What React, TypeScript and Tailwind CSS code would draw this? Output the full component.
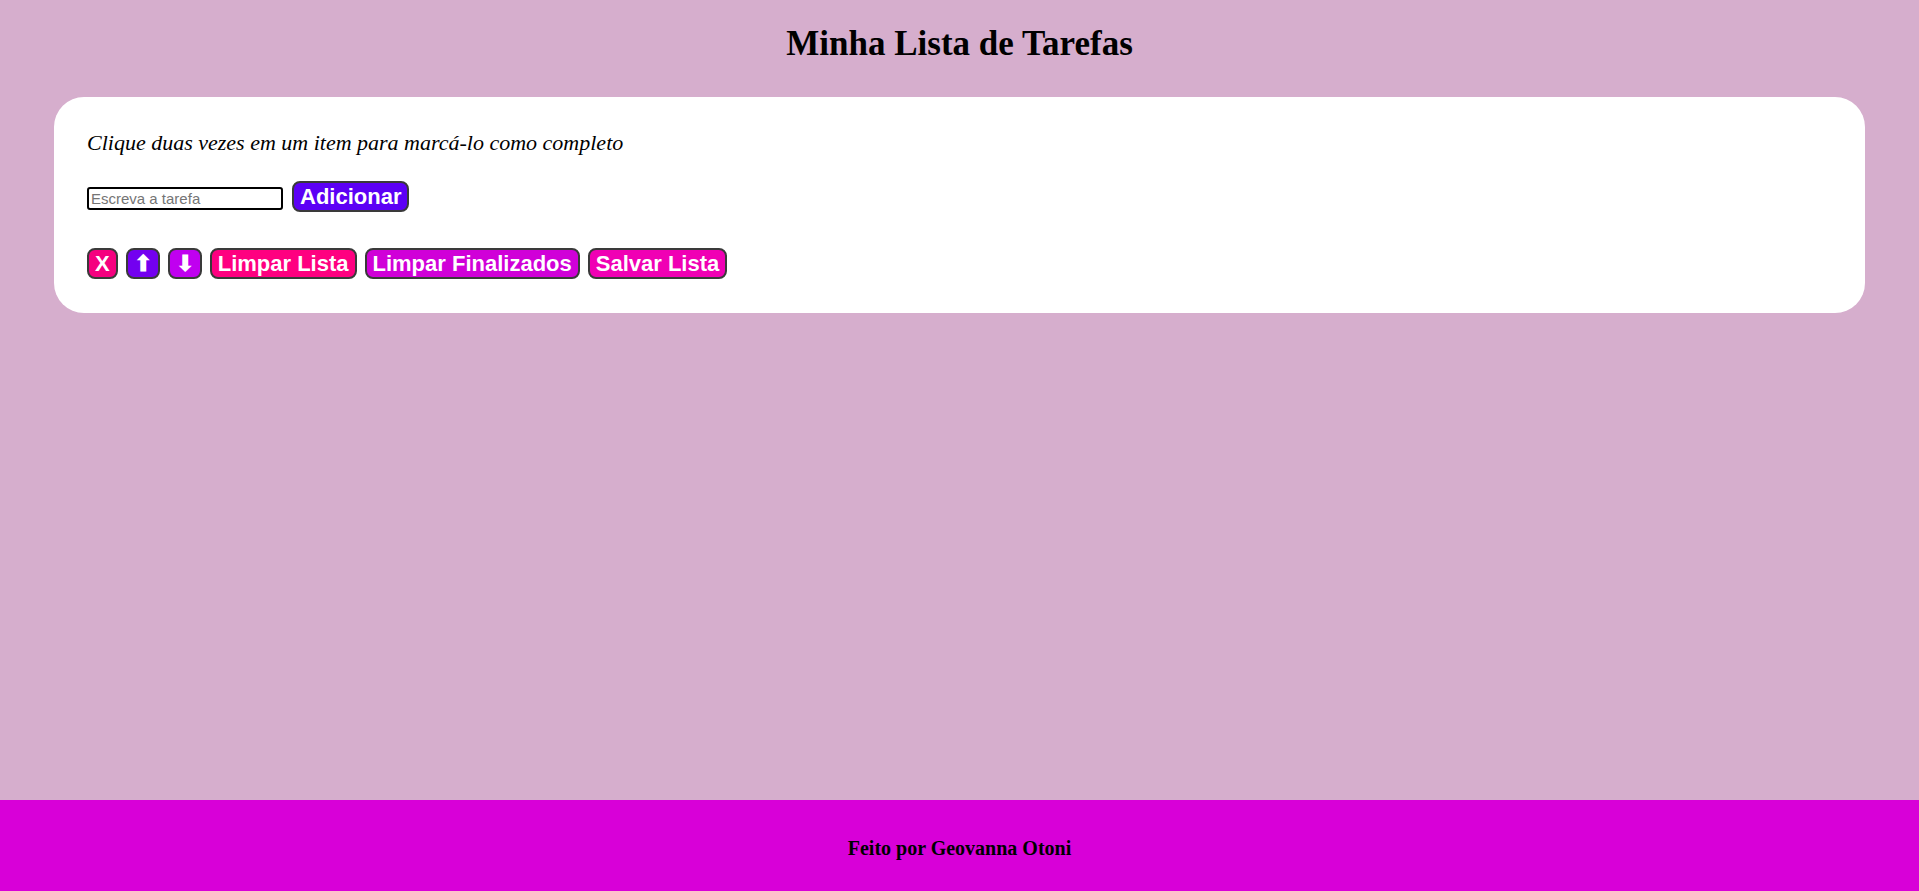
import React from "react";

const serif = { fontFamily: '"Liberation Serif", "Times New Roman", serif' };

function Btn({ children, className }: { children: React.ReactNode; className: string }) {
  return (
    <button
      className={`text-white font-bold text-[22px] leading-[25px] px-[6px] py-[1px] border-2 border-[#3a3a3a] rounded-[8px] font-['Liberation_Sans',Arial,sans-serif] ${className}`}
    >
      {children}
    </button>
  );
}

export default function App() {
  return (
    <div className="min-h-screen flex flex-col bg-[#d6aecd]" style={serif}>
      <h1 className="text-center font-bold text-[35px] leading-[40px] text-black mt-[24px] font-['Liberation_Serif',serif]">
        Minha Lista de Tarefas
      </h1>
      <div className="mx-[54px] mt-[33px] bg-white rounded-[30px] px-[33px] pt-[33px] pb-[34px]">
        <p className="italic text-[22px] leading-[25px] text-black font-['Liberation_Serif',serif]">
          Clique duas vezes em um item para marcá-lo como completo
        </p>
        <div className="mt-[26px] flex items-center gap-[9px]">
          <input
            className="w-[196px] h-[23px] mt-[3px] border-2 border-black rounded-[3px] px-[2px] text-[15px] text-black placeholder:text-[#757575] outline-none font-['Liberation_Sans',Arial,sans-serif]"
            placeholder="Escreva a tarefa"
          />
          <Btn className="bg-[#5c00f5]">Adicionar</Btn>
        </div>
        <div className="mt-[36px] flex items-center gap-[8px]">
          <Btn className="bg-[#f5007f]">X</Btn>
          <Btn className="bg-[#7300f0]">⬆</Btn>
          <Btn className="bg-[#c000f0]">⬇</Btn>
          <Btn className="bg-[#ff0080]">Limpar Lista</Btn>
          <Btn className="bg-[#d000d8]">Limpar Finalizados</Btn>
          <Btn className="bg-[#f000b4]">Salvar Lista</Btn>
        </div>
      </div>
      <footer className="mt-auto h-[91px] bg-[#d800d8] flex items-center justify-center pt-[5px]">
        <span className="font-bold text-[20px] text-black font-['Liberation_Serif',serif]">
          Feito por Geovanna Otoni
        </span>
      </footer>
    </div>
  );
}
